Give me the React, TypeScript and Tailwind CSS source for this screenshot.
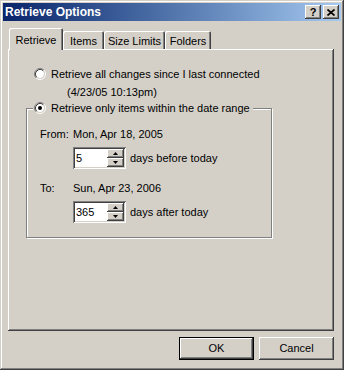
import React from 'react';

const raised = "shadow-[inset_-1px_-1px_#404040,inset_1px_1px_#fff,inset_-2px_-2px_#808080,inset_2px_2px_#d4d0c8]";
const sunken = "shadow-[inset_1px_1px_#808080,inset_-1px_-1px_#fff,inset_2px_2px_#404040,inset_-2px_-2px_#d4d0c8]";

function Radio({ checked }: { checked?: boolean }) {
    return (
        <svg width="12" height="12" viewBox="0 0 12 12" className="shrink-0">
            <circle cx="6" cy="6" r="4.2" fill="#fff" />
            <path d="M2.11 9.89 A5.5 5.5 0 0 1 9.89 2.11" fill="none" stroke="#808080" />
            <path d="M9.89 2.11 A5.5 5.5 0 0 1 2.11 9.89" fill="none" stroke="#fff" />
            <path d="M2.82 9.18 A4.5 4.5 0 0 1 9.18 2.82" fill="none" stroke="#404040" />
            <path d="M9.18 2.82 A4.5 4.5 0 0 1 2.82 9.18" fill="none" stroke="#d4d0c8" />
            {checked && <circle cx="6" cy="6" r="2" fill="#000" />}
        </svg>
    );
}

function Spin({ value }: { value: string }) {
    return (
        <div className={`w-[53px] h-[22px] bg-white p-[2px] flex ${sunken}`}>
            <span className="flex-1 pl-[1px] leading-[18px]">{value}</span>
            <div className="w-[17px] flex flex-col">
                <div className={`h-[9px] bg-[#d4d0c8] flex items-center justify-center ${raised}`}>
                    <svg width="5" height="3" viewBox="0 0 5 3"><path d="M2.5 0 L5 3 L0 3 Z" fill="#000" /></svg>
                </div>
                <div className={`h-[9px] bg-[#d4d0c8] flex items-center justify-center ${raised}`}>
                    <svg width="5" height="3" viewBox="0 0 5 3"><path d="M0 0 L5 0 L2.5 3 Z" fill="#000" /></svg>
                </div>
            </div>
        </div>
    );
}

export default function App() {
    const tabs = [
        { label: 'Retrieve', w: 'w-[54px]', active: true },
        { label: 'Items', w: 'w-[41px]' },
        { label: 'Size Limits', w: 'w-[61px]' },
        { label: 'Folders', w: 'w-[46px]' },
    ];

    return (
        <div className="w-[344px] h-[370px] bg-[#d4d0c8] p-[3px] flex flex-col font-['Liberation_Sans',Arial,sans-serif] text-[11px] text-black shadow-[inset_-1px_-1px_#404040,inset_1px_1px_#d4d0c8,inset_-2px_-2px_#808080,inset_2px_2px_#fff]">
            {/* title bar */}
            <div className="h-[18px] flex items-center pl-[2px] pr-[2px] bg-linear-to-r from-[#0a246a] to-[#a6caf0]">
                <span className="flex-1 text-white font-bold text-[12px] leading-[18px]">Retrieve Options</span>
                <div className={`w-[16px] h-[14px] bg-[#d4d0c8] flex items-center justify-center font-bold text-[11px] leading-none ${raised}`}>?</div>
                <div className={`ml-[2px] w-[16px] h-[14px] bg-[#d4d0c8] flex items-center justify-center ${raised}`}>
                    <svg width="8" height="7" viewBox="0 0 8 7">
                        <path d="M0.5 0.5 L7.5 6.5 M7.5 0.5 L0.5 6.5" stroke="#000" strokeWidth="1.7" />
                    </svg>
                </div>
            </div>

            {/* tabs */}
            <div className="mt-[7px] pl-[6px] h-[21px] flex items-end">
                {tabs.map((t) => (
                    <div
                        key={t.label}
                        className={`${t.w} flex items-center justify-center pt-[2px] bg-[#d4d0c8] rounded-t-[2px] shadow-[inset_1px_1px_#fff,inset_-1px_0_#404040,inset_-2px_0_#808080] ${t.active ? 'h-[22px] -mb-[1px] relative z-10' : 'h-[18px]'}`}
                    >
                        {t.label}
                    </div>
                ))}
            </div>

            {/* panel */}
            <div className={`ml-[5px] w-[326px] h-[282px] pl-[26px] pt-[18px] ${raised}`}>
                <div className="h-[14px] flex items-center">
                    <Radio />
                    <span className="ml-[5px]">Retrieve all changes since I last connected</span>
                </div>
                <div className="mt-[4px] h-[14px] leading-[14px] pl-[33px]">(4/23/05 10:13pm)</div>

                <div className="relative mt-[9px] -ml-[8px] w-[246px] h-[130px] border border-[#808080] shadow-[inset_1px_1px_#fff,1px_1px_#fff] pt-[18px] pl-[13px]">
                    <div className="absolute -top-[8px] left-[6px] h-[14px] flex items-center bg-[#d4d0c8] pl-[1px] pr-[3px]">
                        <Radio checked />
                        <span className="ml-[5px]">Retrieve only items within the date range</span>
                    </div>

                    <div className="h-[14px] flex items-center">
                        <span className="w-[33px]">From:</span>
                        <span>Mon, Apr 18, 2005</span>
                    </div>
                    <div className="mt-[6px] ml-[33px] flex items-center">
                        <Spin value="5" />
                        <span className="ml-[4px]">days before today</span>
                    </div>

                    <div className="mt-[12px] h-[14px] flex items-center">
                        <span className="w-[33px]">To:</span>
                        <span>Sun, Apr 23, 2006</span>
                    </div>
                    <div className="mt-[6px] ml-[33px] flex items-center">
                        <Spin value="365" />
                        <span className="ml-[4px]">days after today</span>
                    </div>
                </div>
            </div>

            {/* buttons */}
            <div className="mt-[6px] pr-[7px] flex justify-end gap-[5px]">
                <button className="w-[75px] h-[23px] border border-black bg-[#d4d0c8] shadow-[inset_-1px_-1px_#404040,inset_1px_1px_#fff,inset_-2px_-2px_#808080] flex items-center justify-center">
                    OK
                </button>
                <button className={`w-[75px] h-[23px] bg-[#d4d0c8] flex items-center justify-center ${raised}`}>
                    Cancel
                </button>
            </div>
        </div>
    );
}
